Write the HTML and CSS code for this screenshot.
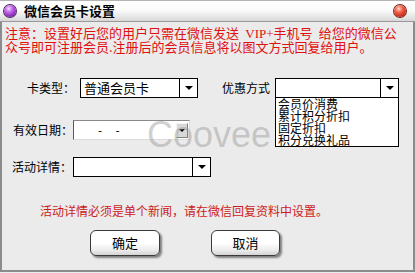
FILE: index.html
```html
<!DOCTYPE html>
<html lang="zh-CN">
<head>
<meta charset="utf-8">
<title>微信会员卡设置</title>
<link rel="stylesheet" href="styles.css">
</head>
<body>
<div class="window">
  <div class="titlebar">
    <span class="ball ball-purple"></span>
    <span class="title">微信会员卡设置</span>
    <span class="ball ball-red"></span>
  </div>
  <div class="content">
    <div class="notice">注意：设置好后您的用户只需在微信发送<span class="latin"> VIP+</span>手机号<span class="latin"> </span>给您的微信公<br>众号即可注册会员.注册后的会员信息将以图文方式回复给用户。</div>

    <div class="row row1">
      <span class="label label4">卡类型：</span>
      <div class="select sel-card">
        <span class="sel-text">普通会员卡</span>
        <span class="sel-btn"><i class="arrow"></i></span>
      </div>
      <span class="label label4 label-gap">优惠方式</span>
      <div class="select sel-discount">
        <span class="sel-text"></span>
        <span class="sel-btn"><i class="arrow"></i></span>
        <ul class="droplist">
          <li>会员价消费</li>
          <li>累计积分折扣</li>
          <li>固定折扣</li>
          <li>积分兑换礼品</li>
        </ul>
      </div>
    </div>

    <div class="row row2">
      <span class="label label5">有效日期：</span>
      <div class="datefield">
        <span class="date-text">-&nbsp;&nbsp;&nbsp;&nbsp;&nbsp;-</span>
        <span class="date-btn"><i class="arrow"></i></span>
      </div>
    </div>

    <div class="row row3">
      <span class="label label5">活动详情：</span>
      <div class="select sel-activity">
        <span class="sel-text"></span>
        <span class="sel-btn"><i class="arrow"></i></span>
      </div>
    </div>

    <div class="hint">活动详情必须是单个新闻，请在微信回复资料中设置。</div>

    <div class="buttons">
      <button class="btn btn-ok">确定</button>
      <button class="btn btn-cancel">取消</button>
    </div>

    <div class="watermark">Coovee</div>
  </div>
</div>
</body>
</html>
```

FILE: styles.css
```css
html, body {
  margin: 0;
  padding: 0;
  background: #ebebeb;
}
body {
  width: 415px;
  height: 273px;
  overflow: hidden;
  font-family: "Noto Sans CJK SC", "Liberation Sans", sans-serif;
  color: #000;
}
.window {
  width: 415px;
  height: 272px;
  display: flex;
  flex-direction: column;
  box-sizing: border-box;
}
.titlebar {
  height: 22px;
  box-sizing: border-box;
  border-top: 1px solid #b4b4b4;
  border-bottom: 1px solid #9a9a9a;
  background: linear-gradient(#ffffff 0%, #fbfbfb 45%, #e6e6e6 80%, #d6d6d6 100%);
  display: flex;
  align-items: center;
  padding-left: 4px;
  padding-right: 9px;
}
.ball {
  width: 12px;
  height: 12px;
  border-radius: 50%;
  flex: none;
}
.ball-purple {
  background: radial-gradient(circle at 40% 30%, #f4d8ff 0%, #c064e8 35%, #7a1aa8 80%, #5a0f80 100%);
  box-shadow: 0 0 0 1px #4a2a5a;
}
.ball-red {
  margin-left: auto;
  background: radial-gradient(circle at 40% 30%, #ffd6cc 0%, #f0604a 35%, #c0200e 80%, #901008 100%);
  box-shadow: 0 0 0 1px #7a2a20;
}
.title {
  margin-left: 8px;
  font-size: 13px;
  font-weight: bold;
  line-height: 16px;
  color: #000;
}
.content {
  flex: 1;
  position: relative;
  border-left: 2px solid #8c8c8c;
  border-right: 2px solid #8c8c8c;
  border-bottom: 2px solid #8c8c8c;
  background: #ebebeb;
}
.notice {
  margin-top: 4px;
  padding-left: 3px;
  font-size: 13px;
  line-height: 13px;
  color: #e01010;
  white-space: nowrap;
}
.latin {
  font-family: "Liberation Serif", serif;
  word-spacing: 3px;
}
.row {
  display: flex;
  align-items: center;
  height: 20px;
  font-size: 12px;
}
.row1 {
  margin-top: 25px;
  padding-left: 25px;
}
.row2 {
  margin-top: 22px;
  padding-left: 11px;
}
.row3 {
  margin-top: 17px;
  padding-left: 10px;
}
.label {
  line-height: 14px;
  white-space: nowrap;
}
.label4 { width: 48px; }
.label5 { width: 60px; }
.label-gap { margin-left: 24px; }
.select {
  position: relative;
  height: 20px;
  box-sizing: border-box;
  border: 1px solid #000;
  background: #fff;
  display: flex;
}
.sel-card {
  margin-left: 5px;
  width: 118px;
}
.sel-discount {
  margin-left: 5px;
  width: 124px;
}
.sel-activity {
  margin-left: 1px;
  width: 138px;
}
.sel-text {
  flex: 1;
  padding-left: 3px;
  font-size: 13px;
  line-height: 18px;
}
.sel-btn {
  width: 17px;
  border-left: 1px solid #000;
  display: flex;
  align-items: center;
  justify-content: center;
}
.arrow {
  display: block;
  width: 0;
  height: 0;
  border-left: 4px solid transparent;
  border-right: 4px solid transparent;
  border-top: 4px solid #000;
}
.droplist {
  position: absolute;
  left: -1px;
  top: 18px;
  width: 124px;
  box-sizing: border-box;
  margin: 0;
  padding: 0 0 0 2px;
  list-style: none;
  border: 1px solid #000;
  background: #fff;
  z-index: 2;
}
.droplist li {
  height: 12px;
  line-height: 12px;
  font-size: 12px;
  white-space: nowrap;
}
.datefield {
  width: 117px;
  height: 20px;
  box-sizing: border-box;
  border-top: 1px solid #8a8a8a;
  border-left: 1px solid #5a5a5a;
  border-right: 1px solid #dcdcdc;
  border-bottom: 1px solid #dcdcdc;
  background: #fff;
  display: flex;
  align-items: center;
}
.date-text {
  flex: 1;
  padding-left: 24px;
  font-size: 12px;
  line-height: 16px;
  white-space: nowrap;
}
.date-btn {
  width: 12px;
  height: 15px;
  margin-right: 1px;
  box-sizing: border-box;
  background: #d8d8d8;
  border-top: 1px solid #f4f4f4;
  border-left: 1px solid #f4f4f4;
  border-right: 1px solid #808080;
  border-bottom: 1px solid #808080;
  display: flex;
  align-items: center;
  justify-content: center;
}
.date-btn .arrow {
  border-left-width: 3px;
  border-right-width: 3px;
  border-top-width: 3px;
}
.hint {
  margin-top: 26px;
  padding-left: 38px;
  font-size: 12px;
  line-height: 15px;
  color: #cc1a1a;
  white-space: nowrap;
}
.buttons {
  margin-top: 12px;
  padding-left: 88px;
  display: flex;
  gap: 51px;
}
.btn {
  width: 70px;
  height: 26px;
  box-sizing: border-box;
  border: 1px solid #3a3a3a;
  border-radius: 6px;
  background: linear-gradient(#ffffff 0%, #ffffff 50%, #ececec 80%, #d4d4d4 100%);
  box-shadow: 2px 2px 2px rgba(0, 0, 0, 0.45);
  font-family: "Noto Sans CJK SC", sans-serif;
  font-size: 13px;
  line-height: 22px;
  color: #000;
  padding: 0;
}
.btn-cancel { width: 69px; }
.watermark {
  position: absolute;
  left: 145px;
  top: 95px;
  font-family: "Liberation Sans", Arial, sans-serif;
  font-size: 36px;
  line-height: 36px;
  color: rgba(150, 150, 150, 0.45);
  pointer-events: none;
  z-index: 1;
}
```
